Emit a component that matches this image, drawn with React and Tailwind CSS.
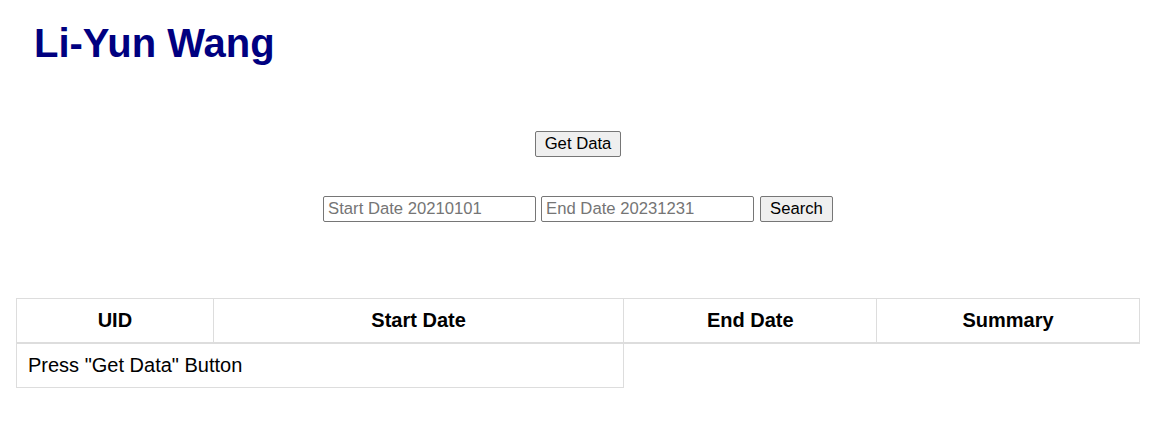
import React from 'react';

const font = { fontFamily: '"Liberation Sans", Arial, sans-serif' };

function App() {
  return (
    <div className="w-[1156px] bg-white text-black" style={font}>
      <h1 className="pl-[34px] mt-[20px] text-[40px] leading-[46px] font-bold text-[#000080]">Li-Yun Wang</h1>

      <div className="mt-[65px] flex justify-center">
        <button className="h-[26px] px-[9px] border border-[#767676] rounded-[2px] bg-[#efefef] text-[16.67px] leading-[20px]">
          Get Data
        </button>
      </div>

      <div className="mt-[39px] flex justify-center items-center">
        <input
          className="w-[213px] h-[26px] px-[4px] border border-[#767676] rounded-[2px] text-[16.67px] placeholder:text-[#757575]"
          placeholder="Start Date 20210101"
        />
        <input
          className="ml-[5px] w-[213px] h-[26px] px-[4px] border border-[#767676] rounded-[2px] text-[16.67px] placeholder:text-[#757575]"
          placeholder="End Date 20231231"
        />
        <button className="ml-[6px] h-[26px] px-[9px] border border-[#767676] rounded-[2px] bg-[#efefef] text-[16.67px] leading-[20px]">
          Search
        </button>
      </div>

      <table className="mt-[76px] mx-[16px] w-[1124px] border-collapse text-[20px] leading-[23px]">
        <thead>
          <tr className="border-b-2 border-[#dddddd]">
            <th className="w-[197px] border border-[#dddddd] py-[10px] font-bold">UID</th>
            <th className="w-[411px] border border-[#dddddd] py-[10px] font-bold">Start Date</th>
            <th className="w-[253px] border border-[#dddddd] py-[10px] font-bold">End Date</th>
            <th className="w-[263px] border border-[#dddddd] py-[10px] font-bold">Summary</th>
          </tr>
        </thead>
        <tbody>
          <tr>
            <td colSpan={2} className="border border-[#dddddd] px-[11px] py-[10px] text-left">
              Press "Get Data" Button
            </td>
          </tr>
        </tbody>
      </table>
    </div>
  );
}

export default App;
